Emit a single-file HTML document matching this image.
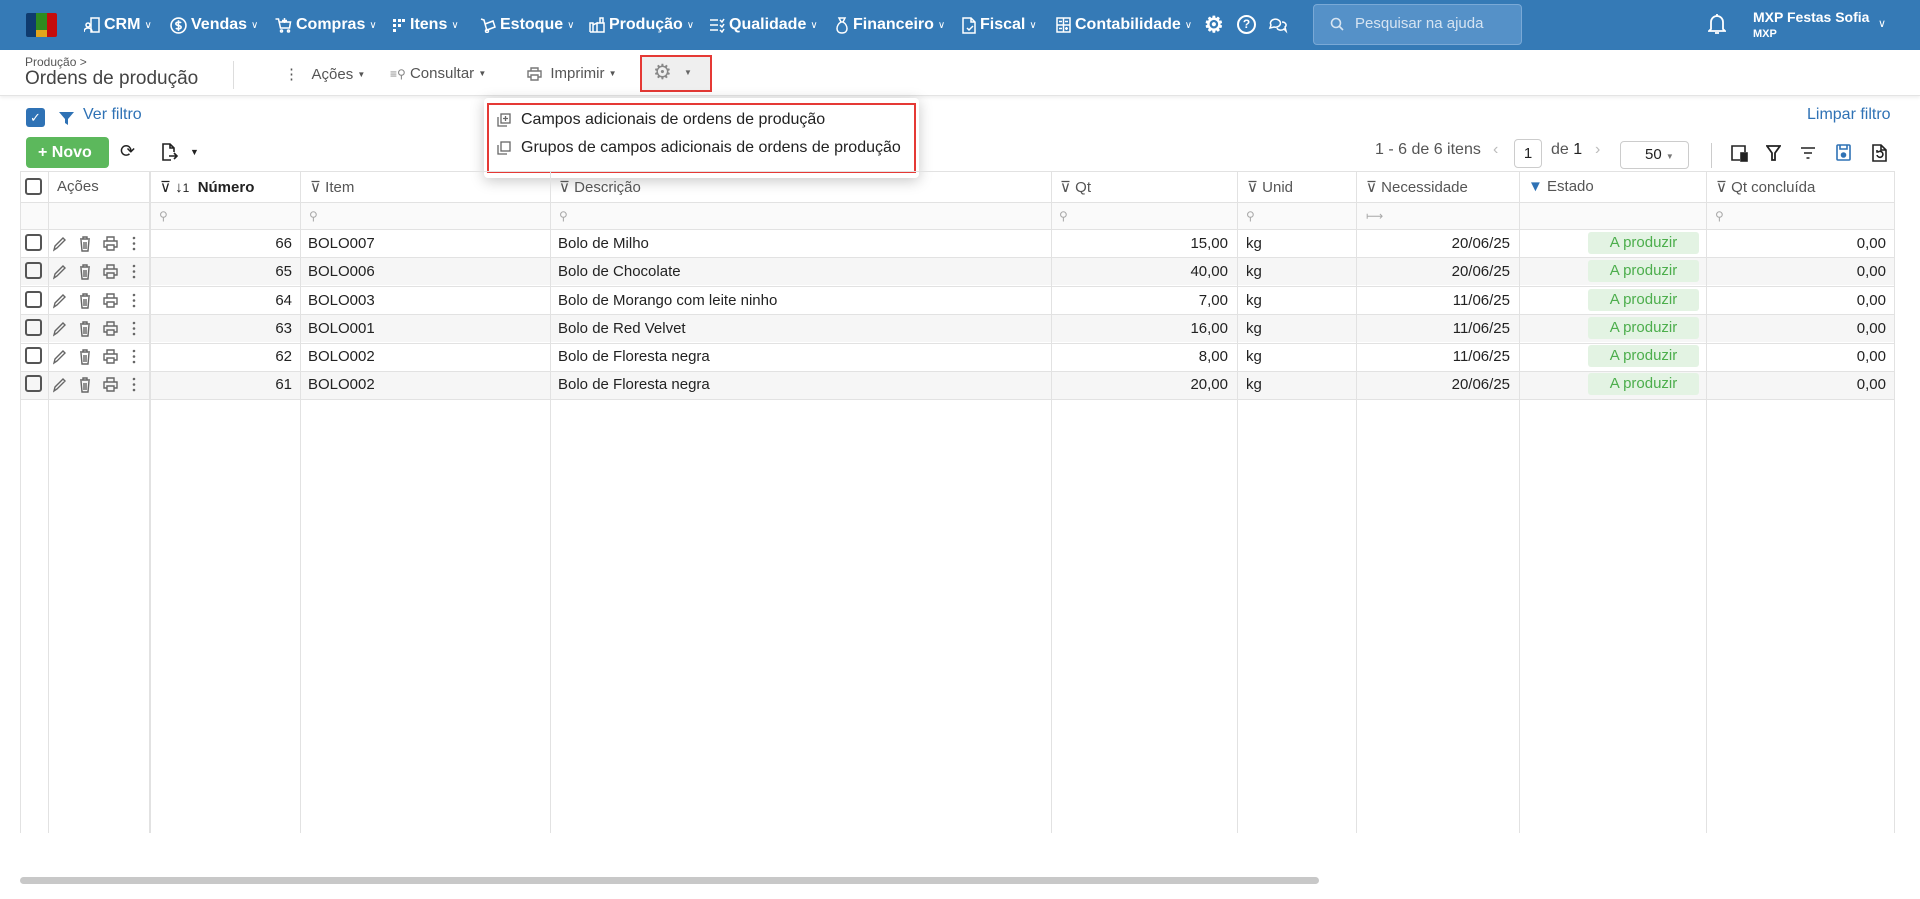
<!DOCTYPE html>
<html><head><meta charset="utf-8"><style>
*{box-sizing:border-box;margin:0;padding:0}
body{width:1920px;height:899px;position:relative;overflow:hidden;background:#fff;font-family:"Liberation Sans",Arial,sans-serif;color:#222;font-size:15px}
.a{position:absolute;white-space:nowrap}
.nav{position:absolute;left:0;top:0;width:1920px;height:50px;background:#357ab6}
.ni{position:absolute;top:0;height:50px;display:flex;align-items:center;color:#fff;font-weight:bold;font-size:16px;white-space:nowrap}
.ni svg{margin-right:4px}
.ni .c{font-weight:normal;font-size:10px;margin-left:4px}
.sub{position:absolute;left:0;top:50px;width:1920px;height:46px;border-bottom:1px solid #e4e4e4;box-shadow:0 2px 3px rgba(0,0,0,.06)}
.tb{color:#555;font-size:15px;top:65px;display:flex;align-items:center}
.vl{position:absolute;top:171px;height:662px;width:1px;background:#e2e2e2}
.hl{position:absolute;left:20px;width:1875px;height:1px;background:#e2e2e2}
.row{position:absolute;left:20px;width:1875px;height:28px}
.hd{position:absolute;top:178px;color:#555;font-size:15px}
.cell{position:absolute;font-size:15px;top:6px;white-space:nowrap}
.r{text-align:right}
.badge{position:absolute;left:1588px;top:3px;width:111px;height:22px;background:#e3f3e3;color:#4cae4c;border-radius:3px;text-align:center;line-height:22px;font-size:15px}
.cb{position:absolute;width:17px;height:17px;border:2px solid #555;border-radius:3px}
.sq{position:absolute;color:#aaa;font-size:12px;top:209px}
</style></head><body>
<div class="nav">
 <div class="a" style="left:26px;top:13px;width:10px;height:24px;background:#0f3b6e;border-radius:2px 0 0 2px"></div>
 <div class="a" style="left:36px;top:13px;width:11px;height:17px;background:#2e8b1f"></div>
 <div class="a" style="left:36px;top:30px;width:11px;height:7px;background:#e3a51b"></div>
 <div class="a" style="left:47px;top:13px;width:10px;height:24px;background:#c40c0c;border-radius:0 2px 2px 0"></div>
 <div class="ni" style="left:84px"><svg width="16" height="16" viewBox="0 0 16 16" fill="none" stroke="#fff" stroke-width="1.5"><rect x="7" y="1" width="8" height="14"/><circle cx="4" cy="8" r="2"/><path d="M0 15c0-3 2-4 4-4s4 1 4 4"/></svg>CRM<span class="c">∨</span></div>
 <div class="ni" style="left:170px"><svg width="17" height="17" viewBox="0 0 16 16" fill="none" stroke="#fff" stroke-width="1.5"><circle cx="8" cy="8" r="7"/><path d="M10.5 5.5c-1-1-5-1-5 1s5 1 5 3-4 2-5 1M8 3v10"/></svg>Vendas<span class="c">∨</span></div>
 <div class="ni" style="left:275px"><svg width="17" height="16" viewBox="0 0 16 16" fill="none" stroke="#fff" stroke-width="1.5"><path d="M0 2h3l2 9h9l1-6H4M9 1v5M6.5 3.5h5"/><circle cx="6" cy="14" r="1"/><circle cx="13" cy="14" r="1"/></svg>Compras<span class="c">∨</span></div>
 <div class="ni" style="left:392px"><svg width="14" height="16" viewBox="0 0 14 16" fill="#fff"><rect x="1" y="2" width="3" height="3"/><rect x="6" y="2" width="3" height="3"/><rect x="1" y="7" width="3" height="3"/><rect x="6" y="7" width="3" height="3"/><rect x="1" y="12" width="3" height="3"/><rect x="10" y="2" width="3" height="3"/></svg>Itens<span class="c">∨</span></div>
 <div class="ni" style="left:480px"><svg width="16" height="16" viewBox="0 0 16 16" fill="none" stroke="#fff" stroke-width="1.5"><path d="M1 2l3 1 3 11M5 7l8-3 2 6-8 3"/><circle cx="7" cy="14" r="1.5"/></svg>Estoque<span class="c">∨</span></div>
 <div class="ni" style="left:589px"><svg width="16" height="16" viewBox="0 0 16 16" fill="none" stroke="#fff" stroke-width="1.5"><path d="M1 15V6h3v9M4 15V8l4-2v9M8 15V6h7v9H1M11 6V1h3v5"/></svg>Produção<span class="c">∨</span></div>
 <div class="ni" style="left:709px"><svg width="16" height="16" viewBox="0 0 16 16" fill="none" stroke="#fff" stroke-width="1.5"><path d="M1 3h8M1 8h8M1 13h8M11 3l2 2 2-3M11 8l2 2 2-3M11 13l2 2 2-3"/></svg>Qualidade<span class="c">∨</span></div>
 <div class="ni" style="left:835px"><svg width="14" height="17" viewBox="0 0 14 17" fill="none" stroke="#fff" stroke-width="1.5"><path d="M4 1h6l-2 4h-2zM6 5C1 8 0 16 7 16s6-8 1-11"/></svg>Financeiro<span class="c">∨</span></div>
 <div class="ni" style="left:962px"><svg width="14" height="17" viewBox="0 0 14 17" fill="none" stroke="#fff" stroke-width="1.5"><path d="M1 1h8l4 4v11H1zM9 1v4h4M5 11l2 2 4-4"/></svg>Fiscal<span class="c">∨</span></div>
 <div class="ni" style="left:1056px"><svg width="15" height="16" viewBox="0 0 15 16" fill="none" stroke="#fff" stroke-width="1.5"><rect x="1" y="1" width="13" height="14"/><path d="M1 8h13M7.5 1v14M3 4.5h3M9 4.5h3M3 11.5h3M10.5 10v3M9 11.5h3"/></svg>Contabilidade<span class="c">∨</span></div>
 <div class="ni" style="left:1204px;font-size:22px">⚙</div>
 <div class="a" style="left:1237px;top:15px;width:19px;height:19px;border:2px solid #fff;border-radius:50%;color:#fff;font-size:12px;font-weight:bold;text-align:center;line-height:15px">?</div>
 <div class="ni" style="left:1268px"><svg width="20" height="18" viewBox="0 0 20 18" fill="none" stroke="#fff" stroke-width="1.5"><path d="M2 12l1-3a5 4 0 1 1 3 2zM9 12a4 3 0 0 0 7 1l2 2-1-4a4 3 0 0 0-3-5"/></svg></div>
 <div class="a" style="left:1313px;top:4px;width:209px;height:41px;background:#5591c8;border:1px solid #7aa9d6;border-radius:4px"></div>
 <svg class="a" style="left:1330px;top:17px" width="14" height="14" viewBox="0 0 14 14" fill="none" stroke="#d6e4f2" stroke-width="1.6"><circle cx="6" cy="6" r="4.5"/><path d="M9.5 9.5l3.5 3.5"/></svg>
 <div class="a" style="left:1355px;top:15px;color:#d6e4f2;font-size:15px">Pesquisar na ajuda</div>
 <svg class="a" style="left:1708px;top:13px" width="18" height="22" viewBox="0 0 18 22" fill="none" stroke="#fff" stroke-width="1.8"><path d="M3 16V9a6 6 0 0 1 12 0v7l2 2H1zM7 20h4M9 1v2"/></svg>
 <div class="a" style="left:1753px;top:9px;color:#fff;font-weight:bold;font-size:14px">MXP Festas Sofia</div>
 <div class="a" style="left:1753px;top:28px;color:#fff;font-weight:bold;font-size:11px">MXP</div>
 <div class="a" style="left:1878px;top:17px;color:#fff;font-size:11px">∨</div>
</div>
<div class="sub">
 <div class="a" style="left:25px;top:5px;font-size:12px;color:#555">Produção &gt;</div>
 <div class="a" style="left:25px;top:18px;font-size:19px;color:#444">Ordens de produção</div>
 <div class="a" style="left:233px;top:11px;width:1px;height:28px;background:#ddd"></div>
</div>
<div class="a tb" style="left:284px">⋮ &nbsp;&nbsp;Ações&nbsp;<span style="font-size:8px">▼</span></div>
<div class="a tb" style="left:390px"><span style="font-size:12px;color:#888">≡⚲</span>&nbsp;Consultar&nbsp;<span style="font-size:8px">▼</span></div>
<div class="a tb" style="left:527px"><svg width="15" height="14" viewBox="0 0 15 14" fill="none" stroke="#777" stroke-width="1.4"><path d="M4 4V1h7v3M4 10H1V4h13v6h-3M4 8h7v5H4z"/></svg>&nbsp;&nbsp;Imprimir&nbsp;<span style="font-size:8px">▼</span></div>
<div class="a" style="left:640px;top:55px;width:72px;height:37px;background:#efefef;border:2px solid #e53935"></div>
<div class="a" style="left:653px;top:60px;color:#888;font-size:21px">⚙</div>
<div class="a" style="left:684px;top:68px;color:#666;font-size:8px">▼</div>
<div class="a" style="left:484px;top:98px;width:435px;height:80px;background:#fff;border-radius:4px;box-shadow:0 3px 14px rgba(0,0,0,.22)"></div>
<div class="a" style="left:487px;top:103px;width:429px;height:70px;border:2px solid #e53935"></div>
<svg class="a" style="left:497px;top:113px" width="14" height="14" viewBox="0 0 14 14" fill="none" stroke="#666" stroke-width="1.3"><rect x="4" y="1" width="9" height="9"/><path d="M1 4v9h9M8.5 3v5M6 5.5h5"/></svg>
<div class="a" style="left:521px;top:111px;font-size:16px">Campos adicionais de ordens de produção</div>
<svg class="a" style="left:497px;top:141px" width="14" height="14" viewBox="0 0 14 14" fill="none" stroke="#666" stroke-width="1.3"><rect x="4" y="1" width="9" height="9"/><path d="M1 4v9h9"/></svg>
<div class="a" style="left:521px;top:139px;font-size:16px">Grupos de campos adicionais de ordens de produção</div>
<div class="a" style="left:26px;top:108px;width:19px;height:19px;background:#2f72b5;border-radius:3px;color:#fff;font-size:13px;text-align:center;line-height:19px">✓</div>
<svg class="a" style="left:59px;top:111px" width="15" height="15" viewBox="0 0 15 15" fill="#2f72b5"><path d="M0 1h15L9 8v6l-3-2V8z"/></svg>
<div class="a" style="left:83px;top:106px;color:#2f72b5;font-size:16px">Ver filtro</div>
<div class="a" style="left:1807px;top:106px;color:#2f72b5;font-size:16px">Limpar filtro</div>
<div class="a" style="left:26px;top:137px;width:83px;height:31px;background:#5cb85c;border-radius:4px;color:#fff;font-weight:bold;font-size:16px;line-height:31px;padding-left:12px">+ Novo</div>
<div class="a" style="left:120px;top:141px;font-size:18px">⟳</div>
<svg class="a" style="left:162px;top:143px" width="16" height="18" viewBox="0 0 16 18" fill="none" stroke="#222" stroke-width="1.6"><path d="M9 17H1V1h7l4 4v4M8 1v4h4M7 13h8M12 10l3 3-3 3"/></svg>
<div class="a" style="left:190px;top:147px;font-size:9px">▼</div>
<div class="a" style="left:1375px;top:141px;color:#555;font-size:16px">1 - 6 de 6 itens</div>
<div class="a" style="left:1493px;top:141px;color:#bbb;font-size:16px">‹</div>
<div class="a" style="left:1514px;top:139px;width:28px;height:29px;border:1px solid #ccc;border-radius:4px;text-align:center;line-height:27px;font-size:15px">1</div>
<div class="a" style="left:1551px;top:141px;color:#555;font-size:16px">de <span style="color:#222">1</span></div>
<div class="a" style="left:1595px;top:141px;color:#bbb;font-size:16px">›</div>
<div class="a" style="left:1620px;top:141px;width:69px;height:28px;border:1px solid #ccc;border-radius:4px;font-size:15px;line-height:26px;padding-left:24px">50 <span style="font-size:8px;color:#777">▼</span></div>
<div class="a" style="left:1711px;top:143px;width:1px;height:25px;background:#ccc"></div>
<svg class="a" style="left:1731px;top:144px" width="18" height="18" viewBox="0 0 18 18" fill="none" stroke="#222" stroke-width="1.6"><path d="M9 16H1V2h13v6"/><rect x="10" y="9" width="6" height="8" fill="#222"/></svg>
<svg class="a" style="left:1766px;top:145px" width="15" height="16" viewBox="0 0 15 16" fill="none" stroke="#222" stroke-width="1.8"><path d="M1 1h13L9 8v7H6V8z"/></svg>
<svg class="a" style="left:1800px;top:146px" width="16" height="14" viewBox="0 0 16 14" fill="none" stroke="#222" stroke-width="1.6"><path d="M1 2h14M4 7h8M6.5 12h3"/></svg>
<svg class="a" style="left:1836px;top:144px" width="15" height="17" viewBox="0 0 15 17" fill="none" stroke="#2f72b5" stroke-width="1.6"><rect x="1" y="1" width="13" height="15" rx="1"/><path d="M4 1v4h7V1"/><circle cx="7.5" cy="11" r="2" fill="#2f72b5"/></svg>
<svg class="a" style="left:1872px;top:144px" width="15" height="18" viewBox="0 0 15 18" fill="none" stroke="#222" stroke-width="1.6"><path d="M9 1H1v16h13V6zM9 1v5h5M5 11a3 3 0 1 0 1-3H5v-2"/></svg>

<div class="row" style="top:229px;background:#fff"></div>
<div class="row" style="top:257px;background:#f6f6f6"></div>
<div class="row" style="top:286px;background:#fff"></div>
<div class="row" style="top:314px;background:#f6f6f6"></div>
<div class="row" style="top:343px;background:#fff"></div>
<div class="row" style="top:371px;background:#f6f6f6"></div>
<div class="a" style="left:20px;top:202px;width:1875px;height:27px;background:#fafafa"></div>
<div class="hl" style="top:171px"></div><div class="hl" style="top:202px"></div><div class="hl" style="top:229px"></div>
<div class="hl" style="top:257px"></div><div class="hl" style="top:286px"></div><div class="hl" style="top:314px"></div>
<div class="hl" style="top:343px"></div><div class="hl" style="top:371px"></div><div class="hl" style="top:399px"></div>
<div class="vl" style="left:20px"></div><div class="vl" style="left:48px"></div><div class="vl" style="left:149px;width:2px"></div>
<div class="vl" style="left:300px"></div><div class="vl" style="left:550px"></div><div class="vl" style="left:1051px"></div>
<div class="vl" style="left:1237px"></div><div class="vl" style="left:1356px"></div><div class="vl" style="left:1519px"></div>
<div class="vl" style="left:1706px"></div><div class="vl" style="left:1894px"></div>
<div class="cb" style="left:25px;top:178px"></div>
<div class="hd" style="left:57px">Ações</div>
<div class="hd" style="left:160px;color:#222">⊽ ↓<span style="font-size:12px">1</span> &nbsp;<b>Número</b></div>
<div class="hd" style="left:310px">⊽ Item</div>
<div class="hd" style="left:559px">⊽ Descrição</div>
<div class="hd" style="left:1060px">⊽ Qt</div>
<div class="hd" style="left:1247px">⊽ Unid</div>
<div class="hd" style="left:1366px">⊽ Necessidade</div>
<div class="hd" style="left:1528px"><span style="color:#2f72b5">▼</span> Estado</div>
<div class="hd" style="left:1716px">⊽ Qt concluída</div>
<div class="sq" style="left:159px">⚲</div><div class="sq" style="left:309px">⚲</div><div class="sq" style="left:559px">⚲</div>
<div class="sq" style="left:1059px">⚲</div><div class="sq" style="left:1246px">⚲</div><div class="sq" style="left:1366px">⟼</div><div class="sq" style="left:1715px">⚲</div>

<svg width="0" height="0" style="position:absolute"><defs>
<g id="ic" fill="none" stroke="#666" stroke-width="1.4">
<path d="M1 14l1-4 8-8 2 2-8 8z"/>
<g transform="translate(4)"><path d="M23 3h10M26 3V1h4v2M24 4l1 11h6l1-11M27 6v7M29 6v7"/></g>
<g transform="translate(13)"><path d="M41 5V1h7v4M41 11h-3V5h13v6h-3M41 9h7v5h-7z"/></g>
<g transform="translate(22)"><circle cx="59" cy="2" r=".6" fill="#666"/><circle cx="59" cy="7.5" r=".6" fill="#666"/><circle cx="59" cy="13" r=".6" fill="#666"/></g>
</g></defs></svg>

<div class="a" style="left:0;top:229px;width:1920px">
<div style="position:relative;height:28.3px">
 <div class="cb" style="left:25px;top:5px"></div><svg class="a" style="left:53px;top:7px" width="86" height="16"><use href="#ic"/></svg>
 <div class="cell r" style="left:150px;width:142px">66</div><div class="cell" style="left:308px">BOLO007</div><div class="cell" style="left:558px">Bolo de Milho</div>
 <div class="cell r" style="left:1051px;width:177px">15,00</div><div class="cell" style="left:1246px">kg</div><div class="cell r" style="left:1356px;width:154px">20/06/25</div>
 <div class="badge">A produzir</div><div class="cell r" style="left:1706px;width:180px">0,00</div></div>
<div style="position:relative;height:28.3px">
 <div class="cb" style="left:25px;top:5px"></div><svg class="a" style="left:53px;top:7px" width="86" height="16"><use href="#ic"/></svg>
 <div class="cell r" style="left:150px;width:142px">65</div><div class="cell" style="left:308px">BOLO006</div><div class="cell" style="left:558px">Bolo de Chocolate</div>
 <div class="cell r" style="left:1051px;width:177px">40,00</div><div class="cell" style="left:1246px">kg</div><div class="cell r" style="left:1356px;width:154px">20/06/25</div>
 <div class="badge">A produzir</div><div class="cell r" style="left:1706px;width:180px">0,00</div></div>
<div style="position:relative;height:28.3px">
 <div class="cb" style="left:25px;top:5px"></div><svg class="a" style="left:53px;top:7px" width="86" height="16"><use href="#ic"/></svg>
 <div class="cell r" style="left:150px;width:142px">64</div><div class="cell" style="left:308px">BOLO003</div><div class="cell" style="left:558px">Bolo de Morango com leite ninho</div>
 <div class="cell r" style="left:1051px;width:177px">7,00</div><div class="cell" style="left:1246px">kg</div><div class="cell r" style="left:1356px;width:154px">11/06/25</div>
 <div class="badge">A produzir</div><div class="cell r" style="left:1706px;width:180px">0,00</div></div>
<div style="position:relative;height:28.3px">
 <div class="cb" style="left:25px;top:5px"></div><svg class="a" style="left:53px;top:7px" width="86" height="16"><use href="#ic"/></svg>
 <div class="cell r" style="left:150px;width:142px">63</div><div class="cell" style="left:308px">BOLO001</div><div class="cell" style="left:558px">Bolo de Red Velvet</div>
 <div class="cell r" style="left:1051px;width:177px">16,00</div><div class="cell" style="left:1246px">kg</div><div class="cell r" style="left:1356px;width:154px">11/06/25</div>
 <div class="badge">A produzir</div><div class="cell r" style="left:1706px;width:180px">0,00</div></div>
<div style="position:relative;height:28.3px">
 <div class="cb" style="left:25px;top:5px"></div><svg class="a" style="left:53px;top:7px" width="86" height="16"><use href="#ic"/></svg>
 <div class="cell r" style="left:150px;width:142px">62</div><div class="cell" style="left:308px">BOLO002</div><div class="cell" style="left:558px">Bolo de Floresta negra</div>
 <div class="cell r" style="left:1051px;width:177px">8,00</div><div class="cell" style="left:1246px">kg</div><div class="cell r" style="left:1356px;width:154px">11/06/25</div>
 <div class="badge">A produzir</div><div class="cell r" style="left:1706px;width:180px">0,00</div></div>
<div style="position:relative;height:28.3px">
 <div class="cb" style="left:25px;top:5px"></div><svg class="a" style="left:53px;top:7px" width="86" height="16"><use href="#ic"/></svg>
 <div class="cell r" style="left:150px;width:142px">61</div><div class="cell" style="left:308px">BOLO002</div><div class="cell" style="left:558px">Bolo de Floresta negra</div>
 <div class="cell r" style="left:1051px;width:177px">20,00</div><div class="cell" style="left:1246px">kg</div><div class="cell r" style="left:1356px;width:154px">20/06/25</div>
 <div class="badge">A produzir</div><div class="cell r" style="left:1706px;width:180px">0,00</div></div>
</div>
<div class="a" style="left:20px;top:877px;width:1299px;height:7px;background:#c8c8c8;border-radius:4px"></div>
</body></html>
